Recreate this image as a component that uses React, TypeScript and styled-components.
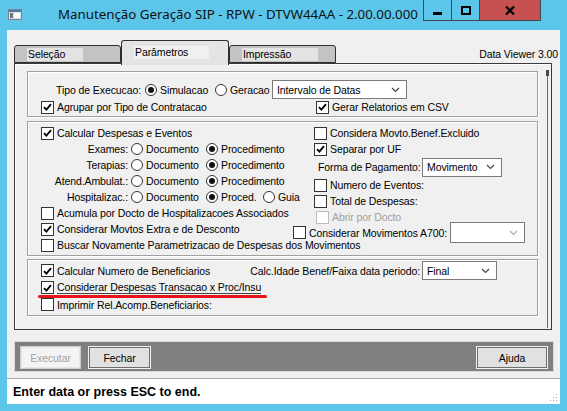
import React from 'react';
import styled, { createGlobalStyle } from 'styled-components';

const GlobalStyle = createGlobalStyle`
  html, body {
    margin: 0;
    padding: 0;
    background: #5cc6ea;
  }
  body {
    font-family: "Liberation Sans", Arial, sans-serif;
    font-size: 10.5px;
    letter-spacing: -0.1px;
    color: #000;
  }
`;

const Frame = styled.div`
  width: 567px;
  height: 411px;
  background: #5cc6ea;
  display: flex;
  flex-direction: column;
  overflow: hidden;
`;

/* ---------- caption ---------- */

const TitleBar = styled.div`
  height: 30px;
  flex: none;
  display: flex;
  align-items: flex-start;
`;

const AppIcon = styled.svg`
  margin: 9px 0 0 8px;
  flex: none;
`;

const Caption = styled.div`
  margin-left: 36px;
  line-height: 28px;
  font-family: "Noto Sans", "Open Sans", sans-serif;
  font-size: 13.3px;
  letter-spacing: 0;
  color: #111;
  white-space: nowrap;
`;

const CaptionButtons = styled.div`
  margin-left: auto;
  margin-right: 26px;
  display: flex;
  height: 21px;
`;

const CaptionButton = styled.div<{ $close?: boolean }>`
  width: ${(p) => (p.$close ? 60 : 27)}px;
  height: 20px;
  border: 1px solid #3d4b52;
  border-top: none;
  margin-left: -1px;
  background: ${(p) => (p.$close ? '#c75050' : 'transparent')};
  display: flex;
  align-items: center;
  justify-content: center;
`;

/* ---------- client area ---------- */

const Client = styled.div`
  flex: 1;
  margin: 0 7px 7px;
  background: #f0f0f0;
  display: flex;
  flex-direction: column;
`;

const TabStrip = styled.div`
  margin-top: 10px;
  height: 23px;
  flex: none;
  display: flex;
  align-items: flex-end;
  padding-left: 7px;
  position: relative;
  z-index: 1;
`;

const Tab = styled.div<{ $active?: boolean; $w: number }>`
  width: ${(p) => p.$w}px;
  box-sizing: border-box;
  height: ${(p) => (p.$active ? 25 : 18)}px;
  margin-bottom: ${(p) => (p.$active ? -2 : 0)}px;
  background: ${(p) => (p.$active ? '#e4e4e4' : '#c3c3c3')};
  border: 1px solid #2e2e2e;
  border-bottom: ${(p) => (p.$active ? 'none' : '1px solid #2e2e2e')};
  border-radius: 3px 3px 0 0;
  padding: ${(p) => (p.$active ? 5 : 2)}px 0 0 12px;
  display: flex;
  align-items: flex-start;
`;

const TabLabel = styled.div<{ $w: number; $active?: boolean }>`
  width: ${(p) => p.$w}px;
  height: 13px;
  line-height: 13px;
  padding-left: 1px;
  background: ${(p) => (p.$active ? '#f0f0f0' : '#e3e3e3')};
  white-space: nowrap;
`;

const ViewerTag = styled.div`
  margin-left: auto;
  margin-right: 2px;
  margin-bottom: 2px;
  line-height: 13px;
  white-space: nowrap;
`;

const Page = styled.div`
  margin-left: 7px;
  width: 538px;
  height: 267px;
  flex: none;
  box-sizing: border-box;
  border: 1px solid #3a3a3a;
  box-shadow: inset 1px 1px 0 #ffffff;
  display: flex;
  padding: 7px 0 0 12px;
`;

const Groups = styled.div`
  width: 511px;
  display: flex;
  flex-direction: column;
`;

const ScrollRail = styled.div`
  margin-left: 9px;
  margin-top: -1px;
  width: 1px;
  height: 258px;
  background: #6b6b6b;
  position: relative;
  &::before {
    content: '';
    position: absolute;
    left: -1px;
    top: 0;
    width: 3px;
    height: 6px;
    background: #4a4a4a;
  }
`;

const Group = styled.div<{ $h: number; $top: number; $gap?: number }>`
  height: ${(p) => p.$h}px;
  box-sizing: border-box;
  margin-top: ${(p) => p.$gap ?? 0}px;
  border: 1px solid #a0a0a0;
  box-shadow: inset 1px 1px 0 #ffffff, 1px 1px 0 #ffffff;
  padding: ${(p) => p.$top}px 0 0 13px;
  display: flex;
  flex-direction: column;
  position: relative;
`;

const Row = styled.div<{ $h?: number; $indent?: number; $lift?: number }>`
  height: ${(p) => p.$h ?? 16}px;
  flex: none;
  display: flex;
  align-items: center;
  padding-left: ${(p) => p.$indent ?? 0}px;
  margin-top: ${(p) => -(p.$lift ?? 0)}px;
  white-space: nowrap;
`;

const Columns = styled.div`
  display: flex;
  height: 112px;
  flex: none;
`;

const LeftColumn = styled.div`
  width: 252px;
  display: flex;
  flex-direction: column;
`;

const RightColumn = styled.div`
  display: flex;
  flex-direction: column;
`;

const Label = styled.span<{ $w?: number; $right?: boolean; $gap?: number }>`
  display: inline-block;
  ${(p) => (p.$w ? `width: ${p.$w}px;` : '')}
  text-align: ${(p) => (p.$right ? 'right' : 'left')};
  margin-right: ${(p) => p.$gap ?? 0}px;
  white-space: nowrap;
  flex: none;
`;

/* ---------- controls ---------- */

const Item = styled.label<{ $w?: number; $disabled?: boolean }>`
  display: inline-flex;
  align-items: center;
  ${(p) => (p.$w ? `width: ${p.$w}px;` : '')}
  flex: none;
  color: ${(p) => (p.$disabled ? '#a0a0a0' : '#000')};
`;

const Box = styled.span<{ $disabled?: boolean }>`
  width: 13px;
  height: 13px;
  box-sizing: border-box;
  border: 1px solid ${(p) => (p.$disabled ? '#bcbcbc' : '#333333')};
  background: #fff;
  margin-right: 3px;
  display: inline-flex;
  align-items: center;
  justify-content: center;
  flex: none;
`;

const Round = styled.span`
  width: 12px;
  height: 12px;
  box-sizing: border-box;
  border: 1px solid #333333;
  border-radius: 50%;
  background: #fff;
  margin-right: 3px;
  display: inline-flex;
  align-items: center;
  justify-content: center;
  flex: none;
`;

const Dot = styled.span`
  width: 6px;
  height: 6px;
  border-radius: 50%;
  background: #111;
`;

const Focused = styled.span`
  border-bottom: 1px solid #444;
  line-height: 12px;
`;

const Dropdown = styled.div<{ $w: number; $h: number }>`
  width: ${(p) => p.$w}px;
  height: ${(p) => p.$h}px;
  box-sizing: border-box;
  border: 1px solid #7a7a7a;
  background: #fff;
  display: flex;
  align-items: center;
  padding: 0 6px 0 4px;
  flex: none;
`;

const DropText = styled.span`
  flex: 1;
  white-space: nowrap;
`;

const Marker = styled.div`
  position: absolute;
  left: 10px;
  top: 35px;
  width: 229px;
  height: 3px;
  border-radius: 2px;
  background: #e8141b;
`;

const ButtonBar = styled.div`
  margin: 11px 0 0 7px;
  width: 540px;
  height: 31px;
  flex: none;
  box-sizing: border-box;
  background: #808080;
  border: 1px solid #d8d8d8;
  display: flex;
  align-items: flex-start;
  padding: 4px 5px 0;
  gap: 7px;
`;

const PushButton = styled.div<{ $w: number; $disabled?: boolean; $end?: boolean }>`
  width: ${(p) => p.$w}px;
  height: 23px;
  box-sizing: border-box;
  margin-left: ${(p) => (p.$end ? 'auto' : '0')};
  background: ${(p) => (p.$disabled ? '#f4f4f4' : '#e1e1e1')};
  border: 1px solid ${(p) => (p.$disabled ? '#cfcfcf' : '#f2f2f2')};
  box-shadow: ${(p) => (p.$disabled ? 'inset 0 0 0 1px #e6e6e6' : 'inset 0 0 0 1px #6e6e6e')};
  color: ${(p) => (p.$disabled ? '#a3a3a3' : '#000')};
  display: flex;
  align-items: center;
  justify-content: center;
`;

const StatusBar = styled.div`
  margin-top: 6px;
  flex: 1;
  background: #fff;
  border-top: 1px solid #a9a9a9;
  display: flex;
  align-items: center;
  padding-left: 6px;
  font-size: 12.5px;
  letter-spacing: 0;
  font-weight: bold;
`;

const Grip = styled.svg`
  align-self: flex-end;
  margin: 0 2px 2px auto;
`;

/* ---------- small parts ---------- */

const Check = ({ on, disabled, children, w }: { on?: boolean; disabled?: boolean; children?: React.ReactNode; w?: number }) => (
  <Item $w={w} $disabled={disabled}>
    <Box $disabled={disabled}>
      {on && (
        <svg width="9" height="8" viewBox="0 0 9 8">
          <path d="M1 4.2 L3.4 6.6 L8 1.2" fill="none" stroke="#000" strokeWidth="1.8" />
        </svg>
      )}
    </Box>
    {children}
  </Item>
);

const Radio = ({ on, children, w }: { on?: boolean; children: React.ReactNode; w?: number }) => (
  <Item $w={w}>
    <Round>{on && <Dot />}</Round>
    {children}
  </Item>
);

const Chevron = () => (
  <svg width="9" height="6" viewBox="0 0 9 6">
    <path d="M1 1 L4.5 4.5 L8 1" fill="none" stroke="#444" strokeWidth="1.2" />
  </svg>
);

const Select = ({ value, w, h = 19, disabled }: { value?: string; w: number; h?: number; disabled?: boolean }) => (
  <Dropdown $w={w} $h={h}>
    <DropText>{value}</DropText>
    <span style={{ opacity: disabled ? 0.45 : 1, display: 'flex' }}>
      <Chevron />
    </span>
  </Dropdown>
);

const RadioLine = ({ label, second, guia }: { label: string; second: string; guia?: boolean }) => (
  <Row>
    <Label $w={87} $right $gap={3}>{label}</Label>
    <Radio w={75}>Documento</Radio>
    <Radio on w={guia ? 57 : undefined}>{second}</Radio>
    {guia && <Radio>Guia</Radio>}
  </Row>
);

export default function App() {
  return (
    <Frame>
      <GlobalStyle />
      <TitleBar>
        <AppIcon width="14" height="11" viewBox="0 0 14 11">
          <rect x="0.5" y="0.5" width="13" height="10" fill="#d9dde2" stroke="#7b8591" />
          <rect x="1" y="1" width="12" height="2" fill="#4d79a8" />
          <rect x="2" y="4" width="3" height="5" fill="#6d7885" />
          <rect x="6" y="4" width="6" height="5" fill="#ffffff" />
        </AppIcon>
        <Caption>Manutenção Geração SIP - RPW - DTVW44AA - 2.00.00.000</Caption>
        <CaptionButtons>
          <CaptionButton>
            <svg width="9" height="9" viewBox="0 0 9 9">
              <rect x="0" y="6" width="9" height="3" fill="#000" />
            </svg>
          </CaptionButton>
          <CaptionButton>
            <svg width="10" height="9" viewBox="0 0 10 9">
              <rect x="1" y="1" width="8" height="7" fill="none" stroke="#000" strokeWidth="2" />
            </svg>
          </CaptionButton>
          <CaptionButton $close>
            <svg width="10" height="9" viewBox="0 0 10 9">
              <path d="M1 0.5 L9 8.5 M9 0.5 L1 8.5" stroke="#000" strokeWidth="2.2" />
            </svg>
          </CaptionButton>
        </CaptionButtons>
      </TitleBar>

      <Client>
        <TabStrip>
          <Tab $w={107}>
            <TabLabel $w={55}>Seleção</TabLabel>
          </Tab>
          <Tab $w={108} $active>
            <TabLabel $w={74} $active>Parâmetros</TabLabel>
          </Tab>
          <Tab $w={107}>
            <TabLabel $w={75}>Impressão</TabLabel>
          </Tab>
          <ViewerTag>Data Viewer 3.00</ViewerTag>
        </TabStrip>

        <Page>
          <Groups>
            <Group $h={46} $top={8}>
              <Row $h={19}>
                <Label $w={100} $right $gap={4}>Tipo de Execucao:</Label>
                <Radio on w={70}>Simulacao</Radio>
                <Radio w={57}>Geracao</Radio>
                <Select value="Intervalo de Datas" w={135} />
              </Row>
              <Row>
                <Check on w={275}>Agrupar por Tipo de Contratacao</Check>
                <Check on>Gerar Relatorios em CSV</Check>
              </Row>
            </Group>

            <Group $h={135} $top={3} $gap={4}>
              <Columns>
                <LeftColumn>
                  <Row>
                    <Check on>Calcular Despesas e Eventos</Check>
                  </Row>
                  <RadioLine label="Exames:" second="Procedimento" />
                  <RadioLine label="Terapias:" second="Procedimento" />
                  <RadioLine label="Atend.Ambulat.:" second="Procedimento" />
                  <RadioLine label="Hospitalizac.:" second="Proced." guia />
                  <Row>
                    <Check>Acumula por Docto de Hospitalizacoes Associados</Check>
                  </Row>
                  <Row>
                    <Check on>Considerar Movtos Extra e de Desconto</Check>
                  </Row>
                </LeftColumn>
                <RightColumn>
                  <Row $indent={21}>
                    <Check>Considera Movto.Benef.Excluido</Check>
                  </Row>
                  <Row $indent={21}>
                    <Check on>Separar por UF</Check>
                  </Row>
                  <Row $h={20} $indent={25}>
                    <Label $w={102} $right $gap={2}>Forma de Pagamento:</Label>
                    <Select value="Movimento" w={80} />
                  </Row>
                  <Row $indent={21}>
                    <Check>Numero de Eventos:</Check>
                  </Row>
                  <Row $indent={21}>
                    <Check>Total de Despesas:</Check>
                  </Row>
                  <Row $indent={23}>
                    <Check disabled>Abrir por Docto</Check>
                  </Row>
                  <Row $h={21} $lift={3}>
                    <Check w={157}>Considerar Movimentos A700:</Check>
                    <Select w={75} h={21} disabled />
                  </Row>
                </RightColumn>
              </Columns>
              <Row>
                <Check>Buscar Novamente Parametrizacao de Despesas dos Movimentos</Check>
              </Row>
            </Group>

            <Group $h={57} $top={2} $gap={3}>
              <Row $h={17}>
                <Check on w={206}>Calcular Numero de Beneficiarios</Check>
                <Label $w={173} $right $gap={2}>Calc.Idade Benef/Faixa data periodo:</Label>
                <Select value="Final" w={75} />
              </Row>
              <Row $h={17}>
                <Check on>
                  <Focused>Considerar Despesas Transacao x Proc/Insu</Focused>
                </Check>
              </Row>
              <Row $h={17}>
                <Check>Imprimir Rel.Acomp.Beneficiarios:</Check>
              </Row>
              <Marker />
            </Group>
          </Groups>
          <ScrollRail />
        </Page>

        <ButtonBar>
          <PushButton $w={61} $disabled>Executar</PushButton>
          <PushButton $w={63}>Fechar</PushButton>
          <PushButton $w={72} $end>Ajuda</PushButton>
        </ButtonBar>

        <StatusBar>
          Enter data or press ESC to end.
          <Grip width="8" height="8" viewBox="0 0 8 8">
            <rect x="6" y="0" width="1" height="1" fill="#a0a0a0" />
            <rect x="3" y="3" width="1" height="1" fill="#a0a0a0" />
            <rect x="6" y="3" width="1" height="1" fill="#a0a0a0" />
            <rect x="0" y="6" width="1" height="1" fill="#a0a0a0" />
            <rect x="3" y="6" width="1" height="1" fill="#a0a0a0" />
            <rect x="6" y="6" width="1" height="1" fill="#a0a0a0" />
          </Grip>
        </StatusBar>
      </Client>
    </Frame>
  );
}
